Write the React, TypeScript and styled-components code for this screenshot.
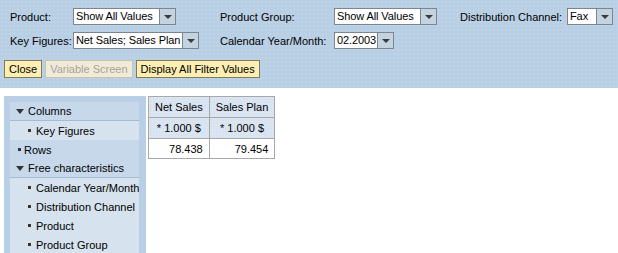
import React from 'react';
import styled, { createGlobalStyle } from 'styled-components';

const GlobalStyle = createGlobalStyle`
  body {
    margin: 0;
    background: #ffffff;
    font-family: 'Liberation Sans', Arial, sans-serif;
    font-size: 11px;
    color: #000000;
  }
`;

interface Filter {
  label: string;
  value: string;
  width: number;
}

const filterRows: Filter[][] = [
  [
    { label: 'Product:', value: 'Show All Values', width: 103 },
    { label: 'Product Group:', value: 'Show All Values', width: 103 },
    { label: 'Distribution Channel:', value: 'Fax', width: 46 }
  ],
  [
    { label: 'Key Figures:', value: 'Net Sales; Sales Plan', width: 126 },
    { label: 'Calendar Year/Month:', value: '02.2003', width: 60 }
  ]
];

interface TreeItem {
  text: string;
  kind: 'open' | 'leaf' | 'child';
}

const tree: TreeItem[] = [
  { text: 'Columns', kind: 'open' },
  { text: 'Key Figures', kind: 'child' },
  { text: 'Rows', kind: 'leaf' },
  { text: 'Free characteristics', kind: 'open' },
  { text: 'Calendar Year/Month', kind: 'child' },
  { text: 'Distribution Channel', kind: 'child' },
  { text: 'Product', kind: 'child' },
  { text: 'Product Group', kind: 'child' }
];

const Dropdown = ({ value, width }: { value: string; width: number }) => (
  <Select style={{ width }}>
    <SelectValue>{value}</SelectValue>
    <SelectArrow>
      <Caret />
    </SelectArrow>
  </Select>
);

const App = () => (
  <>
    <GlobalStyle />
    <Header>
      <FilterGrid>
        {filterRows.map((row, i) =>
          row.map(f => (
            <React.Fragment key={i + f.label}>
              <Label>{f.label}</Label>
              <Cell>
                <Dropdown value={f.value} width={f.width} />
              </Cell>
            </React.Fragment>
          ))
        )}
      </FilterGrid>
      <ButtonBar>
        <Button>Close</Button>
        <Button disabled>Variable Screen</Button>
        <Button>Display All Filter Values</Button>
      </ButtonBar>
    </Header>
    <Content>
      <TreePanel>
        {tree.map(item => (
          <TreeRow key={item.text} kind={item.kind}>
            {item.kind === 'open' ? <Triangle /> : <Bullet />}
            {item.text}
          </TreeRow>
        ))}
      </TreePanel>
      <Grid>
        <colgroup>
          <col style={{ width: 60 }} />
          <col style={{ width: 64 }} />
        </colgroup>
        <tbody>
          <tr>
            <HeadCell>Net Sales</HeadCell>
            <HeadCell>Sales Plan</HeadCell>
          </tr>
          <tr>
            <HeadCell>* 1.000 $</HeadCell>
            <HeadCell>* 1.000 $</HeadCell>
          </tr>
          <tr>
            <DataCell>78.438</DataCell>
            <DataCell>79.454</DataCell>
          </tr>
        </tbody>
      </Grid>
    </Content>
  </>
);

const Header = styled.div`
  background-color: #b9cfe6;
  background-image: radial-gradient(#c3d6df 0.6px, transparent 0.8px);
  background-size: 4px 4px;
  padding: 8px 4px 10px 4px;
`;

const FilterGrid = styled.div`
  display: grid;
  grid-template-columns: 63px 147px 114px 126px 107px auto;
  grid-auto-rows: 17px;
  row-gap: 7px;
  padding-left: 6px;
`;

const Label = styled.div`
  display: flex;
  align-items: center;
  white-space: nowrap;
`;

const Cell = styled.div`
  display: flex;
  align-items: center;
`;

const Select = styled.div`
  box-sizing: border-box;
  display: flex;
  height: 17px;
  border: 1px solid #7c8590;
  background: #ffffff;
`;

const SelectValue = styled.div`
  flex: 1 1 auto;
  padding: 0 1px 0 2px;
  line-height: 15px;
  letter-spacing: -0.1px;
  white-space: nowrap;
  overflow: hidden;
`;

const SelectArrow = styled.div`
  flex: 0 0 15px;
  display: flex;
  align-items: center;
  justify-content: center;
  background: #c3d3df;
  border-left: 1px solid #7c8590;
`;

const Caret = styled.span`
  width: 0;
  height: 0;
  border-left: 4px solid transparent;
  border-right: 4px solid transparent;
  border-top: 4px solid #3a3a3a;
`;

const ButtonBar = styled.div`
  display: flex;
  gap: 3px;
  margin-top: 11px;
`;

const Button = styled.button`
  box-sizing: border-box;
  height: 18px;
  padding: 0 4px;
  font-family: 'Liberation Sans', Arial, sans-serif;
  font-size: 11px;
  line-height: 16px;
  color: #000000;
  background: #fdeeb1;
  border: 1px solid #807a60;
  border-radius: 0;
  cursor: pointer;

  &:disabled {
    color: #a8a49a;
    background: #f0ead8;
    border-color: #c9c3ae;
    cursor: default;
  }
`;

const Content = styled.div`
  display: flex;
  align-items: flex-start;
  gap: 2px;
  padding: 8px 0 0 4px;
`;

const TreePanel = styled.div`
  width: 142px;
  box-sizing: border-box;
  padding: 6px 7px 0 6px;
  background: #b9cfe6;
`;

const TreeRow = styled.div<{ kind: 'open' | 'leaf' | 'child' }>`
  box-sizing: border-box;
  height: 19px;
  display: flex;
  align-items: center;
  white-space: nowrap;
  overflow: hidden;
  padding-left: ${p => (p.kind === 'open' ? 6 : p.kind === 'leaf' ? 8 : 18)}px;
  gap: ${p => (p.kind === 'open' ? 4 : p.kind === 'leaf' ? 3 : 5)}px;
  background: ${p => (p.kind === 'child' ? '#d6e2ee' : '#c6d8ea')};
  border-bottom: ${p => (p.kind === 'open' ? '1px solid #a3bcd6' : 'none')};
`;

const Triangle = styled.span`
  flex: 0 0 auto;
  width: 0;
  height: 0;
  border-left: 4px solid transparent;
  border-right: 4px solid transparent;
  border-top: 5px solid #333333;
`;

const Bullet = styled.span`
  flex: 0 0 auto;
  width: 3px;
  height: 3px;
  background: #333333;
`;

const Grid = styled.table`
  border-collapse: collapse;
  table-layout: fixed;
  font-size: 11px;
`;

const HeadCell = styled.td`
  height: 20px;
  padding: 0 6px;
  text-align: center;
  white-space: nowrap;
  border: 1px solid #a8a8a8;
  background-color: #dce6f3;
  background-image: radial-gradient(#c8d6e8 0.6px, transparent 0.8px);
  background-size: 3px 3px;
`;

const DataCell = styled.td`
  height: 19px;
  padding: 0 6px;
  text-align: right;
  white-space: nowrap;
  border: 1px solid #a8a8a8;
  background: #ffffff;
`;

export default App;
